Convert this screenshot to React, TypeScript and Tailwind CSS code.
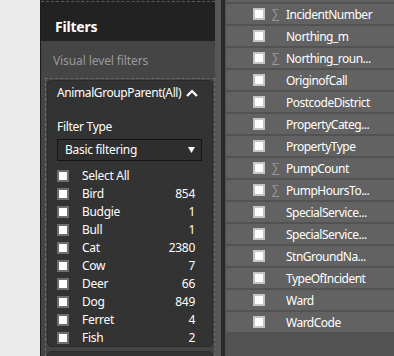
import React from "react";

const font = { fontFamily: '"Noto Sans", "Open Sans", Arial, sans-serif' };

const animals: [string, string][] = [
  ["Bird", "854"],
  ["Budgie", "1"],
  ["Bull", "1"],
  ["Cat", "2380"],
  ["Cow", "7"],
  ["Deer", "66"],
  ["Dog", "849"],
  ["Ferret", "4"],
  ["Fish", "2"],
];

const fields: [string, boolean][] = [
  ["", false],
  ["IncidentNumber", true],
  ["Northing_m", false],
  ["Northing_roun...", true],
  ["OriginofCall", false],
  ["PostcodeDistrict", false],
  ["PropertyCateg...", false],
  ["PropertyType", false],
  ["PumpCount", true],
  ["PumpHoursTo...", true],
  ["SpecialService...", false],
  ["SpecialService...", false],
  ["StnGroundNa...", false],
  ["TypeOfIncident", false],
  ["Ward", false],
  ["WardCode", false],
];

function FilterCheck() {
  return <div className="w-[12px] h-[12px] border-2 border-[#6e6e6e] bg-white shrink-0" />;
}

function FieldCheck() {
  return <div className="w-[12px] h-[12px] border-2 border-[#c4c4c4] bg-white shrink-0" />;
}

export default function App() {
  return (
    <div className="w-[394px] h-[356px] overflow-hidden flex bg-[#ebebeb]" style={font}>
      <div className="w-[40px] shrink-0 bg-[#ebebeb]" />
      <div className="w-[1px] shrink-0 bg-[#1c1c1c]" />
      {/* Filters pane */}
      <div className="w-[174px] shrink-0 flex flex-col bg-[#454545]">
        <div className="h-[41px] shrink-0 bg-[#222222] flex flex-col">
          <div className="mt-[1px] border-t border-dashed border-[#5a5a5a]" />
          <div className="pl-[14px] pt-[15px] text-[14px] leading-[20px] font-bold tracking-[-0.2px] text-white">Filters</div>
        </div>
        <div className="h-[37px] shrink-0 pl-[12px] pt-[11px] text-[12px] leading-[18px] tracking-[-0.1px] text-[#9a9a9a]">
          Visual level filters
        </div>
        <div className="ml-[4px] w-[170px] flex-1 border border-dashed border-b-0 border-[#6a6a6a] px-[1px] pt-[1px] flex flex-col gap-[4px]">
          <div className="h-[267px] shrink-0 rounded-[4px] bg-[#333333] border border-[#2b2b2b] pl-[9px] pr-[10px] flex flex-col text-[12px] tracking-[-0.3px] text-white">
            <div className="mt-[2px] h-[21px] flex items-center justify-between">
              <span className="tracking-[-0.4px] text-[12px]">AnimalGroupParent(All)</span>
              <svg width="12" height="8" viewBox="0 0 12 8" className="mr-[4px]">
                <polyline points="1,7 6,2 11,7" fill="none" stroke="white" strokeWidth="2.2" />
              </svg>
            </div>
            <div className="mt-[16px] h-[16px] flex items-center">Filter Type</div>
            <div className="mt-[4px] h-[23px] border border-[#141414] bg-[#2e2e2e] flex items-center justify-between pl-[7px] pr-[6px]">
              <span>Basic filtering</span>
              <svg width="7" height="6" viewBox="0 0 7 6">
                <polygon points="0,0 7,0 3.5,6" fill="white" />
              </svg>
            </div>
            <div className="mt-[5px] flex flex-col pr-[7px]">
              <div className="h-[18px] pt-[2px] flex items-center">
                <FilterCheck />
                <span className="ml-[13px]">Select All</span>
              </div>
              {animals.map(([n, c]) => (
                <div key={n} className="h-[18px] pt-[2px] flex items-center">
                  <FilterCheck />
                  <span className="ml-[13px] flex-1">{n}</span>
                  <span>{c}</span>
                </div>
              ))}
            </div>
          </div>
          <div className="h-[40px] shrink-0 rounded-[4px] bg-[#333333] border border-[#2b2b2b]" />
        </div>
      </div>
      <div className="w-[6px] shrink-0 bg-[#575757]" />
      <div className="w-[4px] shrink-0 bg-[#2a2a2a]" />
      {/* Fields pane */}
      <div className="flex-1 bg-[#525252] pl-[1px] flex flex-col gap-[2px] -mt-[18px]">
        {fields.map(([name, sigma], i) => (
          <div
            key={i}
            className="h-[20px] shrink-0 rounded-l-[3px] bg-[#626262] flex items-center text-white text-[12px] tracking-[-0.5px]"
          >
            <div className="ml-[27px]">
              <FieldCheck />
            </div>
            <span className="w-[21px] shrink-0 text-center text-[#9a9a9a] text-[12px]">{sigma ? "∑" : ""}</span>
            <span className="whitespace-nowrap pt-[2px]">{name}</span>
          </div>
        ))}
      </div>
    </div>
  );
}
